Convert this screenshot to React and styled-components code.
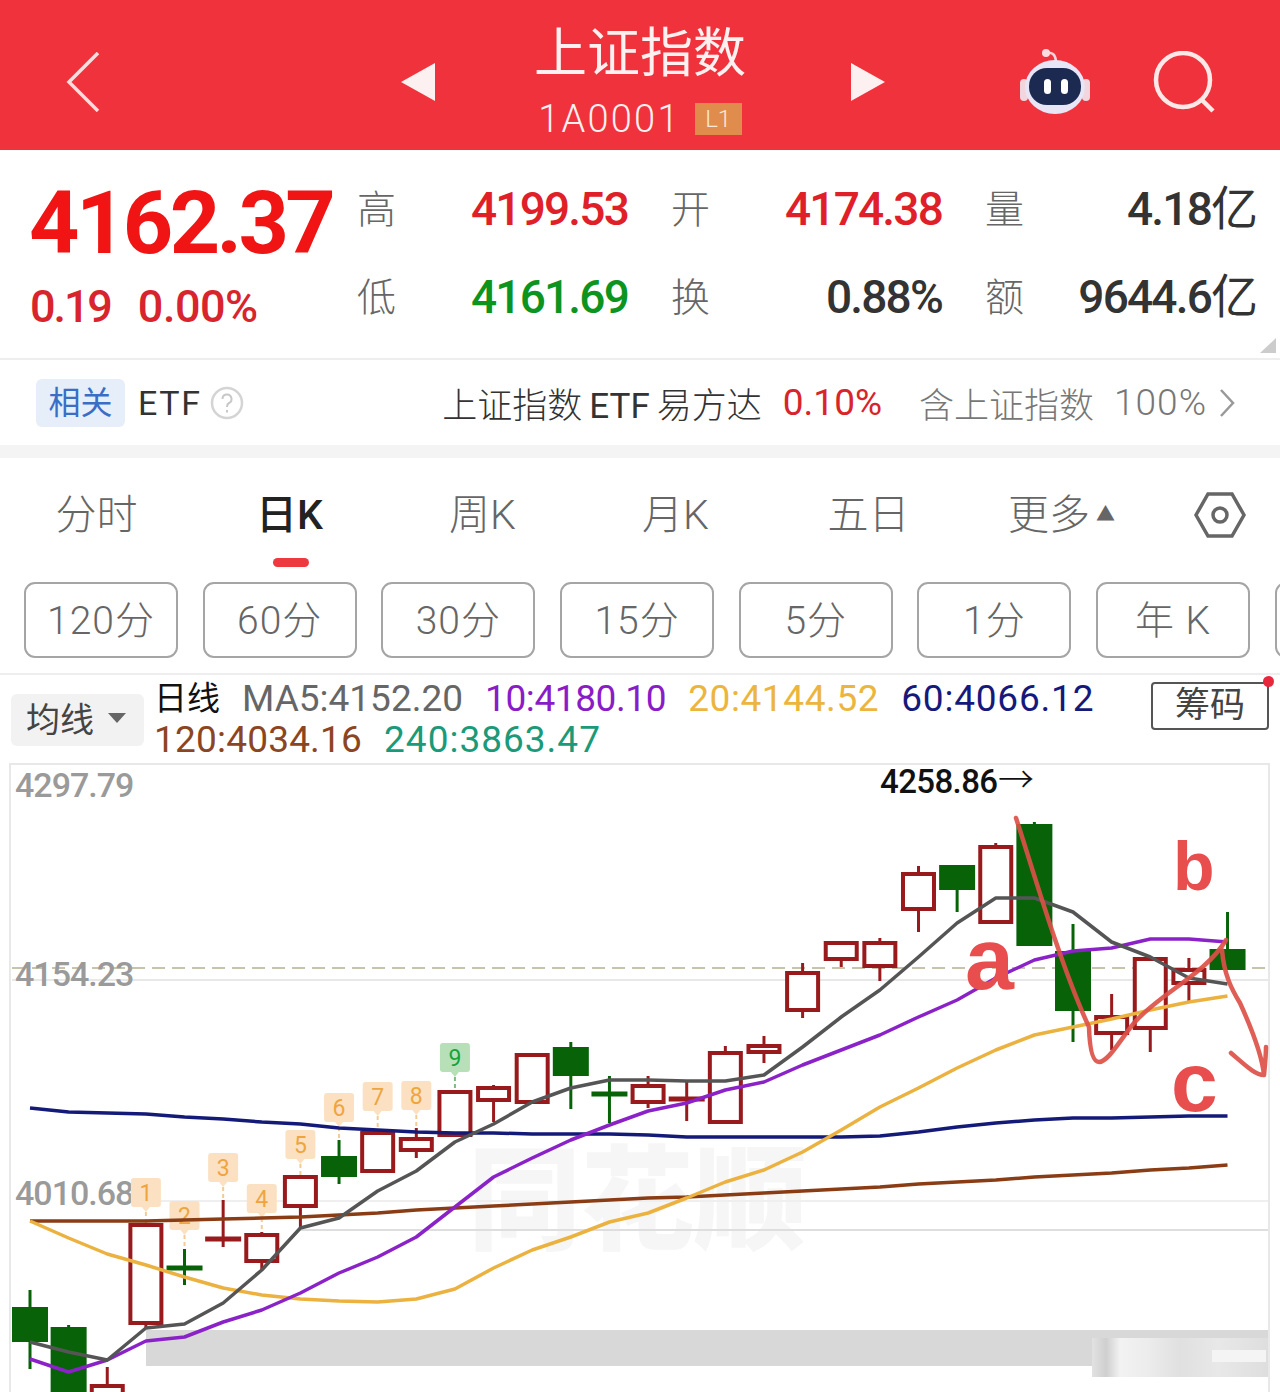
import React from 'react';
import styled, { createGlobalStyle } from 'styled-components';

const FONT = `Roboto, "Noto Sans CJK SC", sans-serif`;

const Global = createGlobalStyle`
  html, body { margin: 0; padding: 0; background: #fff; }
  body { font-family: ${FONT}; overflow-x: hidden; }
  * { box-sizing: border-box; }
`;

const Page = styled.div`
  width: 1280px;
  height: 1392px;
  overflow: hidden;
  background: #fff;
`;

/* ---------- header ---------- */
const Header = styled.header`
  height: 150px;
  background: #f0323c;
  display: grid;
  grid-template-columns: 401px auto 1fr;
  align-items: center;
  color: #fdf0f0;
`;
const BackBox = styled.div`
  padding: 14px 0 0 66px;
  display: flex;
`;
const Center = styled.div`
  display: flex;
  align-items: center;
  gap: 100px;
  padding-top: 14px;
`;
const TitleBlock = styled.div`
  width: 210px;
  margin-right: 6px;
  display: flex;
  flex-direction: column;
  align-items: center;
  margin-top: -2px;
`;
const Title = styled.h1`
  margin: 0 0 10px;
  font-size: 53px;
  line-height: 66px;
  font-weight: 400;
  white-space: nowrap;
`;
const Code = styled.div`
  display: flex;
  align-items: center;
  gap: 14px;
  font-size: 38px;
  line-height: 44px;
  letter-spacing: 2.2px;
  font-weight: 300;
`;
const L1 = styled.span`
  width: 47px;
  height: 32px;
  background: #e08c4c;
  color: #fbe8d4;
  font-size: 24px;
  line-height: 32px;
  letter-spacing: 0;
  text-align: center;
`;
const RightIcons = styled.div`
  display: flex;
  justify-content: flex-end;
  align-items: center;
  gap: 62px;
  padding: 14px 65px 0 0;
`;

/* ---------- quote ---------- */
const Quote = styled.section`
  position: relative;
  height: 208px;
  padding: 37px 0 0 30px;
  display: flex;
`;
const PriceCol = styled.div`
  width: 327px;
  flex: none;
`;
const BigPrice = styled.div`
  margin: 1px 0 0 -1px;
  color: #f01414;
  font-size: 88px;
  line-height: 70px;
  font-weight: 700;
  letter-spacing: -3.6px;
`;
const Changes = styled.div`
  display: flex;
  gap: 27px;
  margin-top: 27px;
  color: #d8242c;
  font-size: 45px;
  line-height: 44px;
  font-weight: 500;
`;
const ChangeValue = styled.span`
  letter-spacing: ${p => p.$track}px;
`;
const Stats = styled.div`
  display: grid;
  grid-template-columns: 271px 271px 273px;
  column-gap: 43px;
  row-gap: 44px;
  align-content: start;
`;
const Stat = styled.div`
  height: 44px;
  display: flex;
  justify-content: space-between;
  align-items: center;
`;
const StatLabel = styled.span`
  font-size: 39px;
  font-weight: 300;
  color: #666;
  padding-bottom: 6px;
`;
const StatValue = styled.span`
  font-size: 46px;
  font-weight: 500;
  letter-spacing: -1.8px;
  color: ${p => p.$color};
  white-space: nowrap;
`;
const Yi = styled.span`
  font-size: 47px;
  line-height: 0;
  font-weight: 400;
  letter-spacing: 0;
`;
const Corner = styled.i`
  position: absolute;
  right: 4px;
  bottom: 5px;
  width: 0;
  height: 0;
  border-style: solid;
  border-width: 0 0 15px 16px;
  border-color: transparent transparent #ccc transparent;
`;

/* ---------- ETF row ---------- */
const EtfRow = styled.section`
  height: 87px;
  border-top: 2px solid #eee;
  padding: 0 45px 0 36px;
  display: flex;
  align-items: center;
  font-size: 35px;
  color: #333;
  font-weight: 300;
`;
const RelTag = styled.span`
  width: 89px;
  height: 48px;
  border-radius: 6px;
  background: #e6eefa;
  color: #3a6ec6;
  font-size: 32px;
  line-height: 48px;
  text-align: center;
  font-weight: 400;
`;
const EtfWord = styled.span`
  margin-left: 13px;
  font-size: 34px;
  letter-spacing: 1.6px;
  font-weight: 400;
`;
const EtfHelp = styled.svg`
  margin-left: 8px;
`;
const EtfName = styled.span`
  margin-left: auto;
  white-space: nowrap;
`;
const EtfLatin = styled.span`
  margin: 0 7px;
  font-weight: 400;
`;
const EtfPct = styled.span`
  margin-left: 21px;
  font-size: 37px;
  color: #d8242c;
  font-weight: 400;
`;
const EtfHold = styled.span`
  margin-left: 37px;
  color: #777;
  white-space: nowrap;
`;
const EtfShare = styled.span`
  margin-left: 20px;
  font-size: 37px;
  color: #777;
  letter-spacing: 1px;
`;
const EtfChevron = styled.svg`
  margin-left: 12px;
`;
const Gap = styled.div`
  height: 13px;
  background: #f4f4f4;
`;

/* ---------- tabs ---------- */
const Tabs = styled.nav`
  height: 117px;
  padding-bottom: 4px;
  display: grid;
  grid-template-columns: repeat(6, 193px) 122px;
  align-items: center;
`;
const Tab = styled.div`
  position: relative;
  text-align: center;
  font-size: 41px;
  line-height: 56px;
  font-weight: ${p => (p.$active ? 500 : 300)};
  color: ${p => (p.$active ? '#222' : '#666')};
  white-space: nowrap;
  &::after {
    content: ${p => (p.$active ? '""' : 'none')};
    position: absolute;
    left: 80px;
    top: 71px;
    width: 36px;
    height: 9px;
    border-radius: 5px;
    background: #ee3a3e;
  }
`;
const Caret = styled.span`
  font-size: 19px;
  vertical-align: 8px;
  margin-left: 6px;
`;
const TabIcon = styled.div`
  display: flex;
  justify-content: flex-end;
  padding-right: 34px;
`;

/* ---------- chips ---------- */
const Chips = styled.div`
  height: 100px;
  padding: 7px 0 0 24px;
  display: flex;
  gap: 24.7px;
  overflow: hidden;
  border-bottom: 2px solid #eee;
`;
const Chip = styled.div`
  flex: none;
  width: 154px;
  height: 76px;
  padding-bottom: 6px;
  border: 2px solid #a5a5a5;
  border-radius: 11px;
  display: flex;
  align-items: center;
  justify-content: center;
  font-size: 39px;
  font-weight: 300;
  color: #666;
  letter-spacing: 1px;
`;

/* ---------- MA legend ---------- */
const MaBar = styled.section`
  position: relative;
  height: 87px;
  display: flex;
  padding-left: 11px;
`;
const MaSelect = styled.div`
  flex: none;
  margin-top: 19px;
  width: 133px;
  height: 52px;
  padding: 0 0 5px 15px;
  border-radius: 6px;
  background: #f2f2f2;
  display: flex;
  align-items: center;
  gap: 14px;
  font-size: 34px;
  color: #444;
`;
const MaArrow = styled.i`
  width: 0;
  height: 0;
  border-style: solid;
  border-width: 10px 9px 0 9px;
  border-color: #666 transparent transparent transparent;
`;
const Legend = styled.div`
  margin: 3px 0 0 10px;
  width: 970px;
  height: 82px;
  display: flex;
  flex-wrap: wrap;
  align-content: flex-start;
  column-gap: 22px;
  font-size: 37px;
  line-height: 41px;
`;
const LegendItem = styled.span`
  height: 41px;
  color: ${p => p.$color};
  letter-spacing: ${p => p.$track || 0}px;
  white-space: nowrap;
  font-weight: 400;
`;
const LegendHead = styled(LegendItem)`
  font-size: 33px;
`;
const ChipsBtn = styled.div`
  position: absolute;
  left: 1151px;
  top: 7px;
  width: 118px;
  height: 48px;
  border: 2px solid #555;
  border-radius: 4px;
  font-size: 35px;
  line-height: 44px;
  text-align: center;
  color: #444;
  &::after {
    content: "";
    position: absolute;
    right: -7px;
    top: -8px;
    width: 11px;
    height: 11px;
    border-radius: 50%;
    background: #e8273c;
  }
`;

/* ---------- chart ---------- */
const Chart = styled.svg`
  display: block;
  width: 1280px;
  height: 629px;
  margin-top: 1px;
`;
const AxisLabel = styled.text`
  font-family: ${FONT};
  font-size: 34px;
  font-weight: 500;
  fill: #9a9a9a;
  letter-spacing: -1px;
`;
const PeakLabel = styled.text`
  font-family: ${FONT};
  font-size: 33px;
  font-weight: 500;
  fill: #111;
  letter-spacing: -0.6px;
`;
const PeakArrow = styled.text`
  font-family: ${FONT};
  font-size: 36px;
  font-weight: 300;
  fill: #111;
`;
const Watermark = styled.text`
  font-family: "Noto Sans CJK SC", sans-serif;
  font-size: 113px;
  font-weight: 900;
  fill: #f6f6f6;
`;
const TagText = styled.text`
  font-family: ${FONT};
  font-size: 23px;
  font-weight: 400;
  text-anchor: middle;
  fill: ${p => p.$color};
`;
const Annot = styled.text`
  font-family: "Liberation Sans", sans-serif;
  font-weight: 700;
  fill: #e84e4e;
  font-size: ${p => p.$size}px;
`;

const RED = '#981a1c';
const GREEN = '#076208';
const xs = i => 30 + i * 38.63;

// [kind, bodyTop, bodyBottom, wickTop, wickBottom]
const CANDLES = [
  ['g', 1307, 1342, 1290, 1369],
  ['g', 1327, 1400, 1325, 1400],
  ['r', 1385, 1410, 1367, 1400],
  ['r', 1224, 1324, 1224, 1328],
  ['gx', 1268, 1268, 1249, 1285],
  ['rx', 1239, 1239, 1200, 1247],
  ['r', 1234, 1262, 1232, 1269],
  ['r', 1176, 1207, 1176, 1229],
  ['g', 1156, 1177, 1140, 1184],
  ['r', 1132, 1172, 1132, 1172],
  ['r', 1138, 1151, 1128, 1158],
  ['r', 1091, 1136, 1091, 1137],
  ['r', 1087, 1101, 1085, 1122],
  ['r', 1054, 1103, 1054, 1103],
  ['g', 1047, 1076, 1042, 1109],
  ['gx', 1094, 1094, 1076, 1123],
  ['r', 1085, 1103, 1076, 1108],
  ['rx', 1099, 1099, 1080, 1121],
  ['r', 1052, 1123, 1046, 1123],
  ['r', 1045, 1053, 1036, 1063],
  ['r', 972, 1011, 963, 1018],
  ['r', 942, 960, 942, 967],
  ['r', 942, 967, 938, 981],
  ['r', 873, 910, 866, 932],
  ['g', 865, 890, 865, 912],
  ['r', 846, 923, 843, 923],
  ['g', 824, 946, 822, 946],
  ['g', 951, 1011, 924, 1042],
  ['r', 1016, 1034, 994, 1050],
  ['r', 958, 1029, 958, 1052],
  ['r', 969, 984, 958, 1001],
  ['g', 949, 970, 912, 970],
];

const MA5 = [1342, 1352, 1360, 1328, 1324, 1303, 1270, 1228, 1218, 1191, 1171, 1142, 1124, 1102, 1088, 1080, 1080, 1081, 1081, 1075, 1047, 1017, 990, 957, 923, 898, 898, 912, 942, 957, 978, 984];
const MA10 = [1359, 1372, 1360, 1341, 1337, 1322, 1310, 1293, 1273, 1257, 1237, 1207, 1177, 1158, 1140, 1125, 1111, 1103, 1090, 1082, 1065, 1050, 1035, 1017, 1000, 978, 960, 951, 948, 939, 939, 942];
const MA20 = [1221, 1238, 1254, 1265, 1277, 1288, 1295, 1299, 1301, 1302, 1299, 1289, 1268, 1250, 1237, 1222, 1213, 1198, 1182, 1170, 1152, 1130, 1107, 1088, 1068, 1050, 1035, 1027, 1019, 1010, 1002, 996];
const MA60 = [1108, 1112, 1113, 1114, 1117, 1119, 1122, 1124, 1128, 1130, 1132, 1133, 1133, 1134, 1134, 1134, 1135, 1137, 1137, 1137, 1137, 1137, 1136, 1132, 1127, 1123, 1120, 1118, 1118, 1117, 1116, 1116];
const MA120 = [1221, 1221, 1221, 1221, 1220, 1219, 1218, 1217, 1215, 1213, 1210, 1208, 1206, 1204, 1202, 1200, 1198, 1197, 1195, 1193, 1191, 1189, 1187, 1184, 1182, 1180, 1177, 1175, 1173, 1170, 1168, 1165];

const pts = arr => arr.map((y, i) => `${xs(i).toFixed(1)},${y}`).join(' ');

const TAGS = [
  [3, 1178, 1224, '1'], [4, 1201, 1249, '2'], [5, 1153, 1200, '3'],
  [6, 1184, 1232, '4'], [7, 1130, 1176, '5'], [8, 1093, 1140, '6'],
  [9, 1082, 1132, '7'], [10, 1081, 1128, '8'], [11, 1043, 1091, '9'],
];

const Candle = ({ i, d }) => {
  const [kind, top, bottom, wt, wb] = d;
  const x = xs(i);
  const color = kind[0] === 'r' ? RED : GREEN;
  if (kind.length === 2) {
    return (
      <g>
        <line x1={x} x2={x} y1={wt} y2={wb} stroke={color} strokeWidth="3" />
        <rect x={x - 18} y={top - 2.5} width="36" height="5" fill={color} />
      </g>
    );
  }
  return (
    <g>
      <line x1={x} x2={x} y1={wt} y2={wb} stroke={color} strokeWidth="3" />
      {kind === 'g'
        ? <rect x={x - 18} y={top} width="36" height={bottom - top} fill={color} />
        : <rect x={x - 15.5} y={top + 1} width="31" height={bottom - top - 2} fill="#fff" stroke={color} strokeWidth="4" />}
    </g>
  );
};

const Tag = ({ i, top, end, label }) => {
  const x = xs(i);
  const green = label === '9';
  const fill = green ? '#b7e0b8' : '#fbe1c2';
  return (
    <g>
      <path d={`M${x - 15} ${top + 3} q0 -3 3 -3 h24 q3 0 3 3 v23 q0 3 -3 3 h-8 l-4 5 l-4 -5 h-8 q-3 0 -3 -3z`} fill={fill} />
      <line x1={x} x2={x} y1={top + 34} y2={end} stroke={green ? '#7fb884' : '#f3cb98'} strokeWidth="2" strokeDasharray="4 3" />
      <TagText x={x} y={top + 23} $color={green ? '#18a33a' : '#efa53f'}>{label}</TagText>
    </g>
  );
};

const Robot = () => (
  <svg width="72" height="66" viewBox="0 0 72 66">
    <path d="M27 4 Q36 2 37 12" fill="none" stroke="#f7d3d8" strokeWidth="2.5" />
    <circle cx="27" cy="4" r="4" fill="#fbdde0" />
    <rect x="1" y="30" width="8" height="22" rx="4" fill="#f3d5dd" />
    <rect x="63" y="30" width="8" height="22" rx="4" fill="#f3d5dd" />
    <ellipse cx="36" cy="38" rx="30" ry="27" fill="#e7e5f6" />
    <rect x="10" y="19" width="52" height="37" rx="18" fill="#1c2a52" />
    <rect x="25" y="30" width="7" height="15" rx="3.5" fill="#fff" />
    <rect x="42" y="30" width="7" height="15" rx="3.5" fill="#fff" />
  </svg>
);

const Arrow = ({ dir }) => (
  <svg width="34" height="38" viewBox="0 0 34 38">
    <path d={dir === 'l' ? 'M34 0 V38 L0 19 Z' : 'M0 0 V38 L34 19 Z'} fill="#fdf0f0" />
  </svg>
);

export default function App() {
  return (
    <Page>
      <Global />
      <Header>
        <BackBox>
          <svg width="34" height="60" viewBox="0 0 34 60">
            <path d="M32 1 L3 30 L32 59" fill="none" stroke="#fbdcdc" strokeWidth="3.5" />
          </svg>
        </BackBox>
        <Center>
          <Arrow dir="l" />
          <TitleBlock>
            <Title>上证指数</Title>
            <Code>1A0001<L1>L1</L1></Code>
          </TitleBlock>
          <Arrow dir="r" />
        </Center>
        <RightIcons>
          <Robot />
          <svg width="62" height="62" viewBox="0 0 62 62">
            <circle cx="30" cy="29" r="27" fill="none" stroke="#fde8e8" strokeWidth="4.5" />
            <path d="M48 48 L60 60" stroke="#fde8e8" strokeWidth="4.5" />
          </svg>
        </RightIcons>
      </Header>

      <Quote>
        <PriceCol>
          <BigPrice>4162.37</BigPrice>
          <Changes>
            <ChangeValue $track={-2.1}>0.19</ChangeValue>
            <ChangeValue $track={-0.5}>0.00%</ChangeValue>
          </Changes>
        </PriceCol>
        <Stats>
          <Stat><StatLabel>高</StatLabel><StatValue $color="#e02028">4199.53</StatValue></Stat>
          <Stat><StatLabel>开</StatLabel><StatValue $color="#e02028">4174.38</StatValue></Stat>
          <Stat><StatLabel>量</StatLabel><StatValue $color="#333">4.18<Yi>亿</Yi></StatValue></Stat>
          <Stat><StatLabel>低</StatLabel><StatValue $color="#0c9420">4161.69</StatValue></Stat>
          <Stat><StatLabel>换</StatLabel><StatValue $color="#333">0.88%</StatValue></Stat>
          <Stat><StatLabel>额</StatLabel><StatValue $color="#333">9644.6<Yi>亿</Yi></StatValue></Stat>
        </Stats>
        <Corner />
      </Quote>

      <EtfRow>
        <RelTag>相关</RelTag>
        <EtfWord>ETF</EtfWord>
        <EtfHelp width="34" height="34" viewBox="0 0 34 34">
          <circle cx="17" cy="17" r="15" fill="none" stroke="#d4d4d4" strokeWidth="2.5" />
          <path d="M12.5 13 a4.5 4.5 0 1 1 6.5 4 q-2 1 -2 4 M17 24 v2.5" fill="none" stroke="#c8c8c8" strokeWidth="2" />
        </EtfHelp>
        <EtfName>上证指数<EtfLatin>ETF</EtfLatin>易方达</EtfName>
        <EtfPct>0.10%</EtfPct>
        <EtfHold>含上证指数</EtfHold>
        <EtfShare>100%</EtfShare>
        <EtfChevron width="16" height="30" viewBox="0 0 16 30">
          <path d="M2 2 L14 15 L2 28" fill="none" stroke="#999" strokeWidth="2.5" />
        </EtfChevron>
      </EtfRow>
      <Gap />

      <Tabs>
        <Tab>分时</Tab>
        <Tab $active>日K</Tab>
        <Tab>周K</Tab>
        <Tab>月K</Tab>
        <Tab>五日</Tab>
        <Tab>更多<Caret>▲</Caret></Tab>
        <TabIcon>
          <svg width="52" height="48" viewBox="0 0 52 48">
            <path d="M14 3 H38 L50 24 L38 45 H14 L2 24 Z" fill="none" stroke="#666" strokeWidth="3.5" />
            <circle cx="26" cy="24" r="7" fill="none" stroke="#666" strokeWidth="3.5" />
          </svg>
        </TabIcon>
      </Tabs>

      <Chips>
        {['120分', '60分', '30分', '15分', '5分', '1分', '年 K', ''].map((t, i) => <Chip key={i}>{t}</Chip>)}
      </Chips>

      <MaBar>
        <MaSelect>均线<MaArrow /></MaSelect>
        <Legend>
          <LegendHead $color="#111">日线</LegendHead>
          <LegendItem $color="#666">MA5:4152.20</LegendItem>
          <LegendItem $color="#8a1cc8" $track={-0.4}>10:4180.10</LegendItem>
          <LegendItem $color="#ebb53e" $track={0.6}>20:4144.52</LegendItem>
          <LegendItem $color="#16197c" $track={0.8}>60:4066.12</LegendItem>
          <LegendItem $color="#8c4522" $track={0.2}>120:4034.16</LegendItem>
          <LegendItem $color="#1a9a78" $track={1}>240:3863.47</LegendItem>
        </Legend>
        <ChipsBtn>筹码</ChipsBtn>
      </MaBar>

      <Chart viewBox="0 763 1280 629">
        <defs>
          <linearGradient id="glare" x1="0" x2="1" y1="0" y2="0">
            <stop offset="0" stopColor="#e2e2e2" />
            <stop offset="0.08" stopColor="#cfcfcf" />
            <stop offset="0.16" stopColor="#f2f2f2" />
            <stop offset="0.32" stopColor="#ececec" />
            <stop offset="0.5" stopColor="#e0e0e0" />
            <stop offset="0.72" stopColor="#e8e8e8" />
            <stop offset="1" stopColor="#dedede" />
          </linearGradient>
        </defs>
        <Watermark x="468" y="1240">同花顺</Watermark>
        <path d="M10 1392 V764 H1269 V1392" fill="none" stroke="#e8e8e8" strokeWidth="2" />
        <line x1="134" x2="1268" y1="1201" y2="1201" stroke="#efefef" strokeWidth="2" />
        <line x1="300" x2="1268" y1="1230" y2="1230" stroke="#dedede" strokeWidth="2" />
        <line x1="12" x2="1268" y1="980" y2="980" stroke="#e8e8e8" strokeWidth="2" />
        <line x1="12" x2="1268" y1="968" y2="968" stroke="#c8c4ac" strokeWidth="2" strokeDasharray="13 7" />

        <rect x="146" y="1330" width="1122" height="36" fill="#d8d8d8" />
        <rect x="1092" y="1338" width="176" height="39" fill="url(#glare)" />
        <rect x="1212" y="1350" width="54" height="12" fill="#f4f4f4" />

        <AxisLabel x="15" y="797">4297.79</AxisLabel>
        <AxisLabel x="15" y="986">4154.23</AxisLabel>
        <AxisLabel x="15" y="1205">4010.68</AxisLabel>
        <PeakLabel x="880" y="793">4258.86</PeakLabel>
        <PeakArrow x="998" y="793">→</PeakArrow>

        {TAGS.map(([i, top, end, label]) => <Tag key={label} i={i} top={top} end={end} label={label} />)}
        {CANDLES.map((d, i) => <Candle key={i} i={i} d={d} />)}

        <polyline points={pts(MA120)} fill="none" stroke="#8a3c14" strokeWidth="3.5" strokeLinejoin="round" />
        <polyline points={pts(MA60)} fill="none" stroke="#141a78" strokeWidth="3.5" strokeLinejoin="round" />
        <polyline points={pts(MA20)} fill="none" stroke="#ebb240" strokeWidth="3.5" strokeLinejoin="round" />
        <polyline points={pts(MA10)} fill="none" stroke="#8a22c8" strokeWidth="3.5" strokeLinejoin="round" />
        <polyline points={pts(MA5)} fill="none" stroke="#555" strokeWidth="3.5" strokeLinejoin="round" />

        <Annot x="965" y="989" $size={88}>a</Annot>
        <Annot x="1173" y="890" $size={68}>b</Annot>
        <Annot x="1171" y="1111" $size={84}>c</Annot>
        <path d="M1016 818 C1030 860 1060 965 1089 1027 Q1090 1062 1099 1062 C1108 1062 1120 1040 1134 1023 C1160 993 1205 975 1226 940 M1222 950 C1224 975 1232 990 1240 1003 C1250 1025 1262 1055 1264 1075 M1231 1053 C1245 1065 1255 1075 1264 1075 C1265 1065 1266 1055 1266 1047"
          fill="none" stroke="#dc5048" strokeWidth="4.5" strokeLinecap="round" strokeLinejoin="round" opacity="0.92" />
      </Chart>
    </Page>
  );
}
